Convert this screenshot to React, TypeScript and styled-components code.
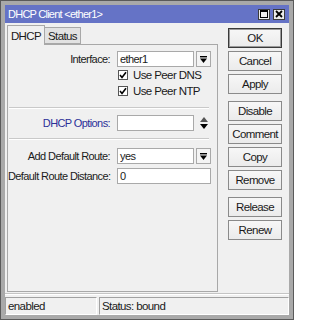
import React from 'react';
import styled, { createGlobalStyle } from 'styled-components';

const GlobalStyle = createGlobalStyle`
  html, body {
    margin: 0;
    padding: 0;
    background: #ffffff;
  }
  * {
    box-sizing: border-box;
  }
`;

const FONT = `'Liberation Sans', Arial, sans-serif`;

// ===== Icons =====

const DropArrow = () => (
  <svg width="7" height="7" viewBox="0 0 7 7">
    <rect x="0" y="0" width="7" height="1.4" fill="#000" />
    <polygon points="0,2.6 7,2.6 3.5,7" fill="#000" />
  </svg>
);

const UpDownArrow = () => (
  <svg width="8" height="12" viewBox="0 0 8 12">
    <polygon points="4,0 8,5 0,5" fill="#555" />
    <polygon points="0,7 8,7 4,12" fill="#000" />
  </svg>
);

const CheckMark = () => (
  <svg width="8" height="8" viewBox="0 0 8 8">
    <polyline points="1,4 3,6.4 7,1.2" fill="none" stroke="#000" strokeWidth="1.6" />
  </svg>
);

// ===== Components =====

const App: React.FC = () => {
  return (
    <>
      <GlobalStyle />
      <Window>
        <TitleBar>
          <TitleText>DHCP Client &lt;ether1&gt;</TitleText>
          <TitleButtons>
            <TitleBtn>
              <svg width="8" height="8" viewBox="0 0 8 8">
                <rect x="0.5" y="0.5" width="7" height="7" fill="none" stroke="#000" />
                <rect x="0" y="0" width="8" height="2" fill="#000" />
              </svg>
            </TitleBtn>
            <TitleBtn>
              <svg width="8" height="8" viewBox="0 0 8 8">
                <path d="M1 1 L7 7 M7 1 L1 7" stroke="#000" strokeWidth="1.8" />
              </svg>
            </TitleBtn>
          </TitleButtons>
        </TitleBar>

        <Body>
          <Main>
            <LeftCol>
              <Tabs>
                <Tab $active>DHCP</Tab>
                <Tab>Status</Tab>
              </Tabs>
              <Panel>
                <FormRow>
                  <Label>Interface:</Label>
                  <Field>
                    <Input>ether1</Input>
                    <SideButton>
                      <DropArrow />
                    </SideButton>
                  </Field>
                </FormRow>
                <CheckRow>
                  <CheckBox>
                    <CheckMark />
                  </CheckBox>
                  <span>Use Peer DNS</span>
                </CheckRow>
                <CheckRow>
                  <CheckBox>
                    <CheckMark />
                  </CheckBox>
                  <span>Use Peer NTP</span>
                </CheckRow>

                <Separator />

                <FormRow>
                  <Label $link>DHCP Options:</Label>
                  <Field>
                    <Input />
                    <SideIcon>
                      <UpDownArrow />
                    </SideIcon>
                  </Field>
                </FormRow>

                <Separator $tight />

                <FormRow>
                  <Label>Add Default Route:</Label>
                  <Field>
                    <Input>yes</Input>
                    <SideButton>
                      <DropArrow />
                    </SideButton>
                  </Field>
                </FormRow>
                <FormRow $gap={4}>
                  <Label>Default Route Distance:</Label>
                  <Field>
                    <Input $full>0</Input>
                  </Field>
                </FormRow>
              </Panel>
            </LeftCol>

            <ButtonCol>
              <ButtonGroup>
                <Button $default>OK</Button>
                <Button>Cancel</Button>
                <Button>Apply</Button>
              </ButtonGroup>
              <ButtonGroup>
                <Button>Disable</Button>
                <Button>Comment</Button>
                <Button>Copy</Button>
                <Button>Remove</Button>
              </ButtonGroup>
              <ButtonGroup>
                <Button>Release</Button>
                <Button>Renew</Button>
              </ButtonGroup>
            </ButtonCol>
          </Main>

          <StatusBar>
            <StatusCell $width={92}>enabled</StatusCell>
            <StatusCell>Status: bound</StatusCell>
          </StatusBar>
        </Body>
      </Window>
    </>
  );
};

export default App;

// ===== Styles =====

const Window = styled.div`
  width: 294px;
  height: 320px;
  display: flex;
  flex-direction: column;
  background: #a9a9a9;
  border: 1px solid #5a5a5a;
  padding: 4px;
  font-family: ${FONT};
  font-size: 11px;
  letter-spacing: -0.6px;
  color: #1a1a1a;
`;

const TitleBar = styled.div`
  height: 18px;
  flex: none;
  display: flex;
  align-items: center;
  justify-content: space-between;
  background: #6573c6;
  padding: 0 4px 0 3px;
`;

const TitleText = styled.span`
  color: #ffffff;
  font-size: 11px;
  letter-spacing: -0.75px;
`;

const TitleButtons = styled.div`
  display: flex;
  gap: 3px;
`;

const TitleBtn = styled.div`
  width: 12px;
  height: 11px;
  background: #ececec;
  border: 1px solid #3c3c3c;
  display: flex;
  align-items: center;
  justify-content: center;
`;

const Body = styled.div`
  flex: 1;
  display: flex;
  flex-direction: column;
  background: #f0f0f0;
`;

const Main = styled.div`
  flex: 1;
  display: flex;
  padding: 2px 6px 0 2px;
  gap: 10px;
`;

const LeftCol = styled.div`
  width: 211px;
  display: flex;
  flex-direction: column;
`;

const Tabs = styled.div`
  display: flex;
  align-items: flex-end;
  height: 19px;
`;

const Tab = styled.div<{ $active?: boolean }>`
  height: ${(p) => (p.$active ? '20px' : '17px')};
  width: ${(p) => (p.$active ? '38px' : '37px')};
  display: flex;
  align-items: center;
  justify-content: center;
  font-size: 11.5px;
  background: ${(p) => (p.$active ? '#f0f0f0' : '#e2e2e2')};
  border: 1px solid #a8a8a8;
  border-bottom: ${(p) => (p.$active ? 'none' : '1px solid #a8a8a8')};
  margin-bottom: ${(p) => (p.$active ? '-1px' : '0')};
  margin-left: ${(p) => (p.$active ? '0' : '-1px')};
  position: relative;
  z-index: ${(p) => (p.$active ? 1 : 0)};
`;

const Panel = styled.div`
  flex: 1;
  border: 1px solid #a8a8a8;
  background: #f0f0f0;
  padding: 6px 0 0 0;
  display: flex;
  flex-direction: column;
`;

const FormRow = styled.div<{ $gap?: number }>`
  display: flex;
  align-items: center;
  height: 16px;
  margin-top: ${(p) => p.$gap ?? 0}px;
`;

const Label = styled.div<{ $link?: boolean }>`
  width: 103px;
  text-align: right;
  padding-right: 1px;
  white-space: nowrap;
  color: ${(p) => (p.$link ? '#2b2f98' : '#1a1a1a')};
`;

const Field = styled.div`
  display: flex;
  align-items: center;
  margin-left: 6px;
  gap: 2px;
`;

const Input = styled.div<{ $full?: boolean }>`
  width: ${(p) => (p.$full ? '94px' : '77px')};
  height: 16px;
  background: #ffffff;
  border: 1px solid #a9a9a9;
  padding: 0 2px;
  display: flex;
  align-items: center;
`;

const SideButton = styled.div`
  width: 15px;
  height: 16px;
  background: #f4f4f4;
  border: 1px solid #a9a9a9;
  display: flex;
  align-items: center;
  justify-content: center;
`;

const SideIcon = styled.div`
  width: 15px;
  height: 16px;
  display: flex;
  align-items: center;
  justify-content: center;
`;

const CheckRow = styled.div`
  display: flex;
  align-items: center;
  height: 16px;
  padding-left: 110px;
  gap: 5px;
  font-size: 11.5px;
`;

const CheckBox = styled.div`
  width: 10px;
  height: 10px;
  background: #ffffff;
  border: 1px solid #555;
  display: flex;
  align-items: center;
  justify-content: center;
`;

const Separator = styled.div<{ $tight?: boolean }>`
  height: 2px;
  margin: ${(p) => (p.$tight ? '7px 8px 8px 1px' : '8px 8px 6px 1px')};
  border-top: 1px solid #c9c9c9;
  border-bottom: 1px solid #ffffff;
`;

const ButtonCol = styled.div`
  width: 54px;
  padding-top: 3px;
  display: flex;
  flex-direction: column;
  gap: 7px;
`;

const ButtonGroup = styled.div`
  display: flex;
  flex-direction: column;
  gap: 3px;
`;

const Button = styled.div<{ $default?: boolean }>`
  height: 20px;
  display: flex;
  align-items: center;
  justify-content: center;
  background: linear-gradient(#f7f7f7, #ebebeb);
  border: 1px solid ${(p) => (p.$default ? '#3a3a3a' : '#8a8a8a')};
  box-shadow: ${(p) => (p.$default ? 'inset 0 0 0 1px #9a9a9a' : 'none')};
  font-size: 11.5px;
`;

const StatusBar = styled.div`
  display: flex;
  gap: 2px;
  height: 21px;
  padding-top: 2px;
  border-top: 1px solid #ffffff;
  margin-top: 2px;
  box-shadow: 0 -1px 0 #c4c4c4;
`;

const StatusCell = styled.div<{ $width?: number }>`
  ${(p) => (p.$width ? `width: ${p.$width}px;` : 'flex: 1;')}
  display: flex;
  align-items: center;
  padding-left: 2px;
  border: 1px solid #a0a0a0;
  border-right-color: #ffffff;
  border-bottom-color: #ffffff;
  font-size: 11.5px;
`;
